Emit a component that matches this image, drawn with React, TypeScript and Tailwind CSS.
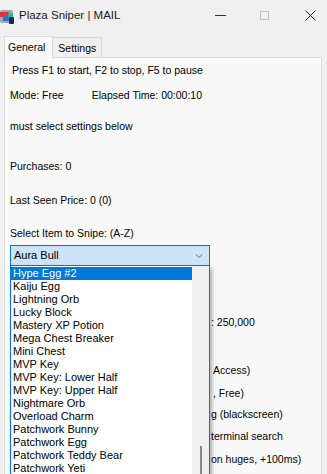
import { ChevronDown } from "lucide-react";

const items = [
  "Hype Egg #2",
  "Kaiju Egg",
  "Lightning Orb",
  "Lucky Block",
  "Mastery XP Potion",
  "Mega Chest Breaker",
  "Mini Chest",
  "MVP Key",
  "MVP Key: Lower Half",
  "MVP Key: Upper Half",
  "Nightmare Orb",
  "Overload Charm",
  "Patchwork Bunny",
  "Patchwork Egg",
  "Patchwork Teddy Bear",
  "Patchwork Yeti",
];

function AppIcon() {
  return (
    <svg width="16" height="17" viewBox="0 0 16 17" className="shrink-0">
      <rect x="0" y="2" width="13" height="13" rx="2" fill="#9aa7b8" />
      <rect x="0" y="4" width="9" height="5" fill="#d9363e" />
      <rect x="3" y="7" width="8" height="6" fill="#2f6fd0" />
      <rect x="8" y="5" width="5" height="5" fill="#2bb3a3" />
      <rect x="9" y="9" width="5" height="7" rx="1" fill="#1d2a44" />
    </svg>
  );
}

export default function App() {
  return (
    <div
      className="relative w-[327px] h-[474px] overflow-hidden bg-[#f0f0f0] text-black"
      style={{ fontFamily: "'Liberation Sans', Arial, sans-serif" }}
    >
      {/* ─── Title bar ─── */}
      <div className="h-[31px] flex items-center">
        <div className="pt-[1px]">
          <AppIcon />
        </div>
        <span className="ml-[3px] text-[11.5px] text-[#1a1a1a]">Plaza Sniper | MAIL</span>
        <div className="ml-auto flex items-center">
          <div className="w-[11px] h-[1px] bg-[#333] mr-[34px]" />
          <div className="w-[9px] h-[9px] border border-[#c4c4c4] mr-[36px]" />
          <svg width="11" height="11" viewBox="0 0 11 11" className="mr-[11px]">
            <path d="M0.5 0.5L10.5 10.5M10.5 0.5L0.5 10.5" stroke="#222" strokeWidth="1" />
          </svg>
        </div>
      </div>

      {/* ─── Tabs ─── */}
      <div className="flex items-end h-[26px] pl-[4px] pt-[4px]">
        <div className="h-[22px] pl-[3px] pr-[7px] pt-[2px] bg-[#f9f9f9] border border-b-0 border-[#d9d9d9] text-[10.5px] leading-[16px] relative z-10 -mb-[1px]">
          General
        </div>
        <div className="h-[20px] px-[5px] bg-[#f0f0f0] border border-l-0 border-b-0 border-[#d9d9d9] text-[10.5px] leading-[20px]">
          Settings
        </div>
      </div>

      {/* ─── Panel ─── */}
      <div className="ml-[4px] w-[318px] h-[420px] bg-[#f9f9f9] border border-[#dcdcdc] pl-[5px] text-[10.5px] leading-[13px]">
        <div className="mt-[6px] ml-[2px]">Press F1 to start, F2 to stop, F5 to pause</div>
        <div className="mt-[12px] flex">
          <span>Mode: Free</span>
          <span className="ml-[28px]">Elapsed Time: 00:00:10</span>
        </div>
        <div className="mt-[18px]">must select settings below</div>
        <div className="mt-[27px]">Purchases: 0</div>
        <div className="mt-[21px]">Last Seen Price: 0 (0)</div>
        <div className="mt-[20px]">Select Item to Snipe: (A-Z)</div>
        <div className="mt-[5px] w-[200px] h-[21px] bg-[#cce4f7] border border-[#0078d7] flex items-center pl-[3px] pr-[4px] text-[11px]">
          <span>Aura Bull</span>
          <ChevronDown className="ml-auto w-[12px] h-[12px] text-[#444]" strokeWidth={1.5} />
        </div>

        <div className="pl-[201px]">
          <div className="mt-[50px]">: 250,000</div>
          <div className="mt-[35px] pl-[2px]">Access)</div>
          <div className="mt-[10px] pl-[2px]">, Free)</div>
          <div className="mt-[8px]">g (blackscreen)</div>
          <div className="mt-[9px]">terminal search</div>
          <div className="mt-[10px]">on huges, +100ms)</div>
        </div>
      </div>

      {/* ─── Open dropdown list ─── */}
      <div className="absolute left-[10px] top-[266px] w-[200px] h-[220px] bg-white border-x border-[#0078d7] shadow-[2px_2px_4px_rgba(0,0,0,0.3)] flex">
        <div className="w-[181px] pt-[1px] text-[11px] leading-[13px]">
          {items.map((item, i) => (
            <div
              key={item}
              className={
                i === 0
                  ? "h-[13px] pl-[2px] bg-[#0078d7] text-white"
                  : "h-[13px] pl-[2px] text-black"
              }
            >
              {item}
            </div>
          ))}
        </div>
        <div className="flex-1 bg-[#f0f0f0] relative">
          <div className="absolute left-[8px] top-[180px] w-[2px] h-[40px] bg-[#868686]" />
        </div>
      </div>
    </div>
  );
}
